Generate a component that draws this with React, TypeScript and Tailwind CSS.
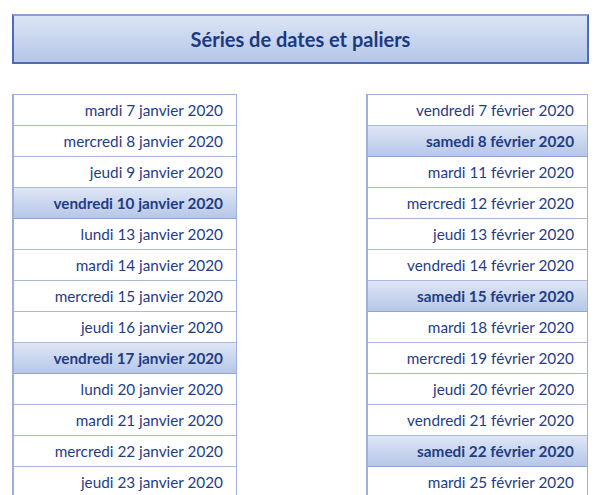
import React from "react";

type Row = { t: string; b?: boolean };

const left: Row[] = [
  { t: "mardi 7 janvier 2020" },
  { t: "mercredi 8 janvier 2020" },
  { t: "jeudi 9 janvier 2020" },
  { t: "vendredi 10 janvier 2020", b: true },
  { t: "lundi 13 janvier 2020" },
  { t: "mardi 14 janvier 2020" },
  { t: "mercredi 15 janvier 2020" },
  { t: "jeudi 16 janvier 2020" },
  { t: "vendredi 17 janvier 2020", b: true },
  { t: "lundi 20 janvier 2020" },
  { t: "mardi 21 janvier 2020" },
  { t: "mercredi 22 janvier 2020" },
  { t: "jeudi 23 janvier 2020" },
];

const right: Row[] = [
  { t: "vendredi 7 février 2020" },
  { t: "samedi 8 février 2020", b: true },
  { t: "mardi 11 février 2020" },
  { t: "mercredi 12 février 2020" },
  { t: "jeudi 13 février 2020" },
  { t: "vendredi 14 février 2020" },
  { t: "samedi 15 février 2020", b: true },
  { t: "mardi 18 février 2020" },
  { t: "mercredi 19 février 2020" },
  { t: "jeudi 20 février 2020" },
  { t: "vendredi 21 février 2020" },
  { t: "samedi 22 février 2020", b: true },
  { t: "mardi 25 février 2020" },
];

function Table({ rows, w }: { rows: Row[]; w: string }) {
  return (
    <div className={`${w} border-l-2 border-r border-t border-[#9db0d8] flex flex-col`}>
      {rows.map((r, i) => (
        <div
          key={i}
          className={
            r.b
              ? "h-[31px] shrink-0 border-b border-[#8fa6d4] bg-gradient-to-b from-[#dfe6f5] to-[#b6c7e8] flex items-center justify-end pr-[13px] text-[15.3px] font-bold text-[#1f3d86]"
              : "h-[31px] shrink-0 border-b border-[#a9bbdd] bg-white flex items-center justify-end pr-[13px] text-[15.3px] text-[#1f3d86]"
          }
        >
          {r.t}
        </div>
      ))}
    </div>
  );
}

export default function App() {
  return (
    <div
      className="w-[600px] h-[495px] overflow-hidden bg-white pl-[12px] pt-[14px]"
      style={{ fontFamily: "Lato, 'Noto Sans', sans-serif" }}
    >
      <div className="w-[577px] h-[50px] border-2 border-[#4e6cb5] border-t-[#8aa0d2] bg-gradient-to-b from-[#dde5f5] to-[#b5c6e7] flex items-center justify-center text-[20px] font-bold text-[#1c3a80]">
        Séries de dates et paliers
      </div>
      <div className="flex mt-[30px]">
        <Table rows={left} w="w-[225px]" />
        <div className="w-[129px] shrink-0" />
        <Table rows={right} w="w-[222px]" />
      </div>
    </div>
  );
}
